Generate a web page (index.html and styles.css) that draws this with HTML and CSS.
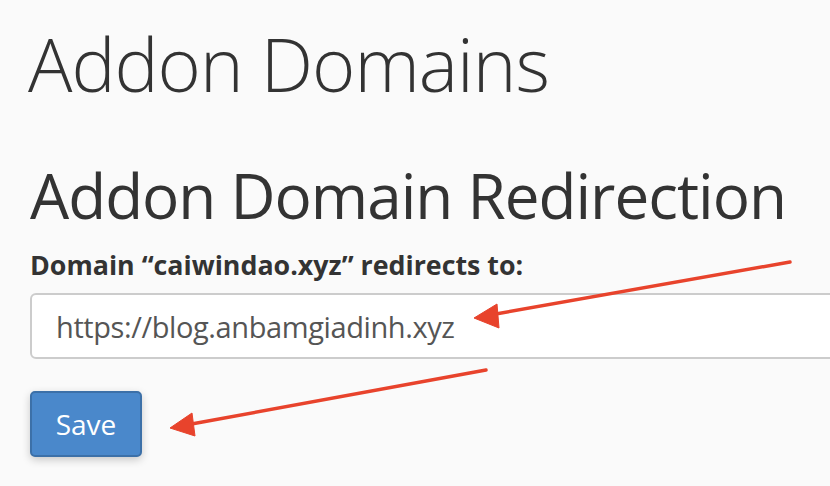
FILE: index.html
```html
<!DOCTYPE html>
<html>
<head>
<meta charset="utf-8">
<link rel="stylesheet" href="styles.css">
</head>
<body>
<div class="page">
  <h1 class="title">Addon Domains</h1>
  <h2 class="subtitle">Addon Domain Redirection</h2>
  <label class="label">Domain “caiwindao.xyz” redirects to:</label>
  <div class="input">https://blog.anbamgiadinh.xyz</div>
  <button class="save">Save</button>
</div>
<svg class="arrows" width="830" height="486" viewBox="0 0 830 486">
  <g fill="#e8432c" stroke="#e8432c">
    <line x1="790" y1="262" x2="490" y2="315" stroke-width="3.5" stroke-linecap="round"/>
    <polygon points="474,318 497,304 499,328" stroke-width="1" stroke-linejoin="round"/>
    <line x1="486" y1="370" x2="186" y2="425" stroke-width="3.5" stroke-linecap="round"/>
    <polygon points="170,428 192,413 195,436" stroke-width="1" stroke-linejoin="round"/>
  </g>
</svg>
</body>
</html>
```
FILE: styles.css
```css
html, body {
  margin: 0;
  padding: 0;
  background: #fafafa;
  width: 830px;
  height: 486px;
  overflow: hidden;
}
body {
  position: relative;
  font-family: "Open Sans", "Liberation Sans", sans-serif;
  color: #333;
}
.page {
  padding: 0 0 0 30px;
  display: flex;
  flex-direction: column;
  align-items: flex-start;
}
.title {
  margin: 14px 0 0 -2px;
  font-weight: 300;
  font-size: 74px;
  line-height: 100px;
  letter-spacing: -1px;
}
.subtitle {
  margin: 46px 0 0 0;
  font-weight: 400;
  font-size: 62px;
  line-height: 70px;
  letter-spacing: -1px;
}
.label {
  margin-top: 18px;
  font-weight: 700;
  font-size: 26.8px;
  line-height: 34px;
}
.input {
  margin-top: 11px;
  box-sizing: border-box;
  width: 830px;
  height: 66px;
  border: 2px solid #cccccc;
  border-radius: 6px;
  background: #fff;
  padding: 0 0 0 24px;
  display: flex;
  align-items: center;
  font-size: 29px;
  color: #555;
  letter-spacing: -0.4px;
}
.save {
  margin-top: 32px;
  width: 112px;
  height: 66px;
  box-sizing: border-box;
  background: #4a88cb;
  border: 2px solid #3c70a8;
  border-radius: 5px;
  color: #fff;
  font-family: "Open Sans", "Liberation Sans", sans-serif;
  font-size: 28px;
  box-shadow: 0 3px 8px rgba(0,0,0,0.2);
  padding: 0;
}
.arrows {
  position: absolute;
  left: 0;
  top: 0;
}
```
